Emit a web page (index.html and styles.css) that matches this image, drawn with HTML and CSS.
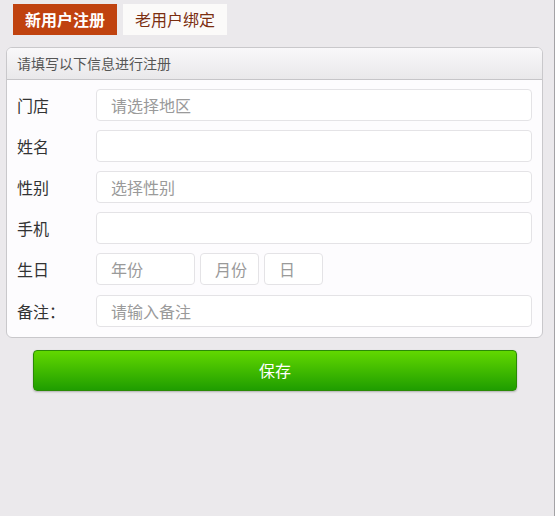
FILE: index.html
```html
<!DOCTYPE html>
<html lang="zh-CN">
<head>
<meta charset="utf-8">
<title>注册</title>
<link rel="stylesheet" href="styles.css">
</head>
<body>
<div class="page">
  <div class="tabs">
    <div class="tab tab-active">新用户注册</div>
    <div class="tab">老用户绑定</div>
  </div>
  <div class="panel">
    <div class="panel-head">请填写以下信息进行注册</div>
    <div class="panel-body">
      <div class="row"><span class="label">门店</span><div class="field"><span class="ph">请选择地区</span></div></div>
      <div class="row"><span class="label">姓名</span><div class="field"></div></div>
      <div class="row"><span class="label">性别</span><div class="field"><span class="ph">选择性别</span></div></div>
      <div class="row"><span class="label">手机</span><div class="field"></div></div>
      <div class="row"><span class="label">生日</span>
        <div class="dates">
          <div class="field f-year"><span class="ph">年份</span></div>
          <div class="field f-month"><span class="ph">月份</span></div>
          <div class="field f-day"><span class="ph">日</span></div>
        </div>
      </div>
      <div class="row row-last"><span class="label">备注：</span><div class="field"><span class="ph">请输入备注</span></div></div>
    </div>
  </div>
  <div class="btn">保存</div>
</div>
</body>
</html>
```
FILE: styles.css
```css
html, body {
  margin: 0;
  padding: 0;
  background: #ebe9ec;
}
body {
  font-family: "Noto Sans CJK SC", "Noto Sans", sans-serif;
}
.page {
  width: 554px;
  height: 516px;
  border-right: 1px solid #a3a2a5;
  box-sizing: content-box;
}
.tabs {
  display: flex;
  gap: 6px;
  padding: 4px 0 0 13px;
}
.tab {
  width: 104px;
  height: 31px;
  line-height: 31px;
  text-align: center;
  font-size: 16px;
  color: #7b2e10;
  background: #fbfaf9;
}
.tab-active {
  background: #c0420f;
  color: #fff;
  font-weight: bold;
}
.panel {
  margin: 12px 0 0 6px;
  width: 537px;
  box-sizing: border-box;
  border: 1px solid #c9c8cb;
  border-radius: 6px;
  background: #fdfcfe;
  overflow: hidden;
}
.panel-head {
  height: 31px;
  line-height: 31px;
  padding-left: 10px;
  font-size: 14px;
  color: #555;
  background: linear-gradient(#f9f8fa, #e9e8ea);
  border-bottom: 1px solid #c6c5c8;
}
.panel-body {
  padding: 9px 10px 10px 10px;
  display: flex;
  flex-direction: column;
  gap: 9px;
}
.row {
  display: flex;
  align-items: center;
  height: 32px;
}
.row-last {
  margin-top: 1px;
}
.label {
  width: 79px;
  flex: none;
  font-size: 16px;
  color: #333;
}
.field {
  flex: 1;
  height: 32px;
  box-sizing: border-box;
  border: 1px solid #e4e3e6;
  border-radius: 4px;
  background: #fff;
  padding-left: 14px;
  line-height: 30px;
  font-size: 16px;
}
.ph {
  color: #9a9a9a;
}
.dates {
  display: flex;
  gap: 5px;
  flex: 1;
}
.f-year { flex: none; width: 99px; }
.f-month { flex: none; width: 59px; }
.f-day { flex: none; width: 59px; }
.btn {
  margin: 12px 0 0 33px;
  width: 484px;
  height: 41px;
  box-sizing: border-box;
  border: 1px solid #2a8a06;
  border-radius: 4px;
  background: linear-gradient(#62d800, #1f9d00);
  color: #fff;
  font-size: 16px;
  text-align: center;
  line-height: 39px;
  box-shadow: 0 1px 2px rgba(0,0,0,0.25);
}
```
